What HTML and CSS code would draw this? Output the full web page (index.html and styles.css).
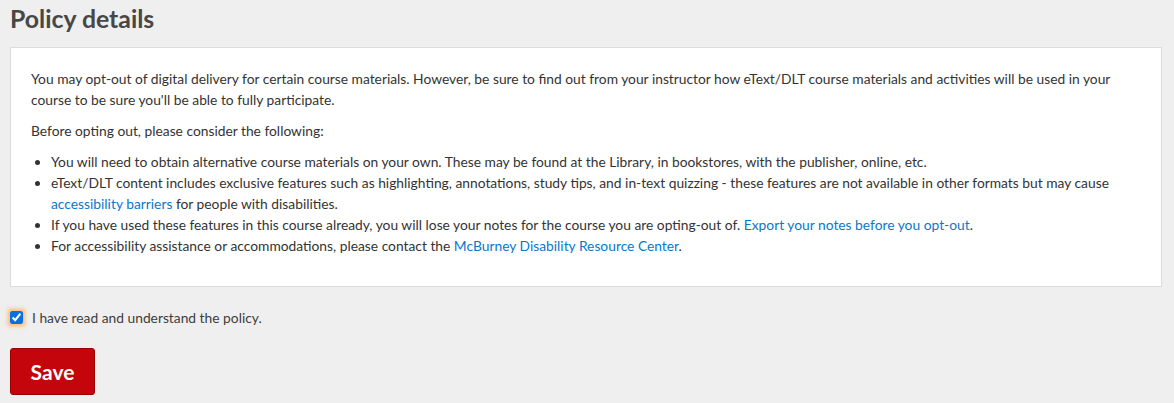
FILE: index.html
```html
<!DOCTYPE html>
<html lang="en">
<head>
<meta charset="utf-8">
<title>Policy details</title>
<link rel="stylesheet" href="styles.css">
</head>
<body>
<main class="page">
  <h1 class="title">Policy details</h1>
  <section class="policy">
    <p>You may opt-out of digital delivery for certain course materials. However, be sure to find out from your instructor how eText/DLT course materials and activities will be used in your course to be sure you'll be able to fully participate.</p>
    <p>Before opting out, please consider the following:</p>
    <ul class="list">
      <li>You will need to obtain alternative course materials on your own. These may be found at the Library, in bookstores, with the publisher, online, etc.</li>
      <li>eText/DLT content includes exclusive features such as highlighting, annotations, study tips, and in-text quizzing - these features are not available in other formats but may cause <a href="#">accessibility barriers</a> for people with disabilities.</li>
      <li>If you have used these features in this course already, you will lose your notes for the course you are opting-out of. <a href="#">Export your notes before you opt-out</a>.</li>
      <li>For accessibility assistance or accommodations, please contact the <a href="#">McBurney Disability Resource Center</a>.</li>
    </ul>
  </section>
  <label class="agree">
    <input type="checkbox" class="check" checked>
    <span>I have read and understand the policy.</span>
  </label>
  <button class="save" type="button">Save</button>
</main>
</body>
</html>
```
FILE: styles.css
```css
html, body {
  margin: 0;
  padding: 0;
  background: #efefef;
}
body {
  font-family: Lato, "Open Sans", sans-serif;
  color: #333;
  font-size: 13.8px;
  line-height: 21px;
}
.page {
  padding: 0 12px 0 10px;
  display: flex;
  flex-direction: column;
  align-items: flex-start;
}
.title {
  margin: 3px 0 0;
  font-size: 24.8px;
  line-height: 32px;
  font-weight: 700;
  color: #474747;
}
.policy {
  align-self: stretch;
  margin-top: 12px;
  background: #fff;
  border: 1px solid #dcdcdc;
  padding: 20px 20px 20px 20px;
}
.policy p {
  margin: 0 0 10px;
}
.list {
  margin: 0 0 10px;
  padding-left: 20px;
}
.list li {
  line-height: 21px;
}
a {
  color: #0a77cc;
  text-decoration: none;
}
.agree {
  display: flex;
  align-items: center;
  gap: 9px;
  margin-top: 20px;
  color: #3d3d3d;
}
.check {
  margin: 0;
  width: 13px;
  height: 13px;
  accent-color: #0a6fe0;
  box-shadow: 0 0 4px 2px rgba(255, 170, 60, 0.75);
  border-radius: 2px;
}
.save {
  margin-top: 20px;
  width: 85px;
  height: 47px;
  background: #c5050c;
  color: #fff;
  border: 1px solid #9b0000;
  border-radius: 3px;
  font-family: Lato, "Open Sans", sans-serif;
  font-weight: 700;
  font-size: 21px;
  padding: 0;
  cursor: pointer;
}
```
